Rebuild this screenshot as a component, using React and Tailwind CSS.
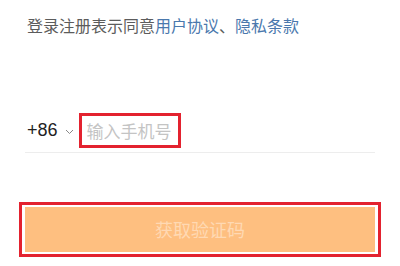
export default function App() {
  return (
    <div className="w-[400px] h-[266px] bg-white overflow-hidden font-['Liberation_Sans','Noto_Sans_CJK_SC',sans-serif]">
      <div className="px-[25px] pt-[13px]">
        {/* Agreement line */}
        <p className="pl-[2px] text-[16px] leading-[24px] text-[#5c5c5c] font-['Noto_Sans_CJK_SC',sans-serif]">
          登录注册表示同意<span className="text-[#4a78ad]">用户协议</span>、<span className="text-[#4a78ad]">隐私条款</span>
        </p>

        {/* Phone row */}
        <div className="mt-[76px] pb-[4px] border-b border-[#ededed]">
          <div className="h-[35px] flex items-center">
            <span className="pl-[2px] text-[18px] text-[#222]">+86</span>
            <svg className="ml-[7px] mt-[2px]" width="9" height="6" viewBox="0 0 9 6" fill="none">
              <path d="M1 1l3.5 3.5L8 1" stroke="#888" strokeWidth="1" />
            </svg>
            <div className="ml-[5px] h-[35px] w-[102px] border-[3px] border-[#e3222f] flex items-center pl-[5px]">
              <span className="text-[17px] text-[#c4c4c4] font-['Noto_Sans_CJK_SC',sans-serif]">输入手机号</span>
            </div>
          </div>
        </div>

        {/* Get code button */}
        <div className="mt-[49px] -mx-[6px] border-[3px] border-[#e3222f] px-[3px] py-[2px]">
          <div className="h-[45px] bg-[#febf80] flex items-center justify-center">
            <span className="text-[18px] text-[#ffd9b3] font-['Noto_Sans_CJK_SC',sans-serif]">获取验证码</span>
          </div>
        </div>
      </div>
    </div>
  );
}
